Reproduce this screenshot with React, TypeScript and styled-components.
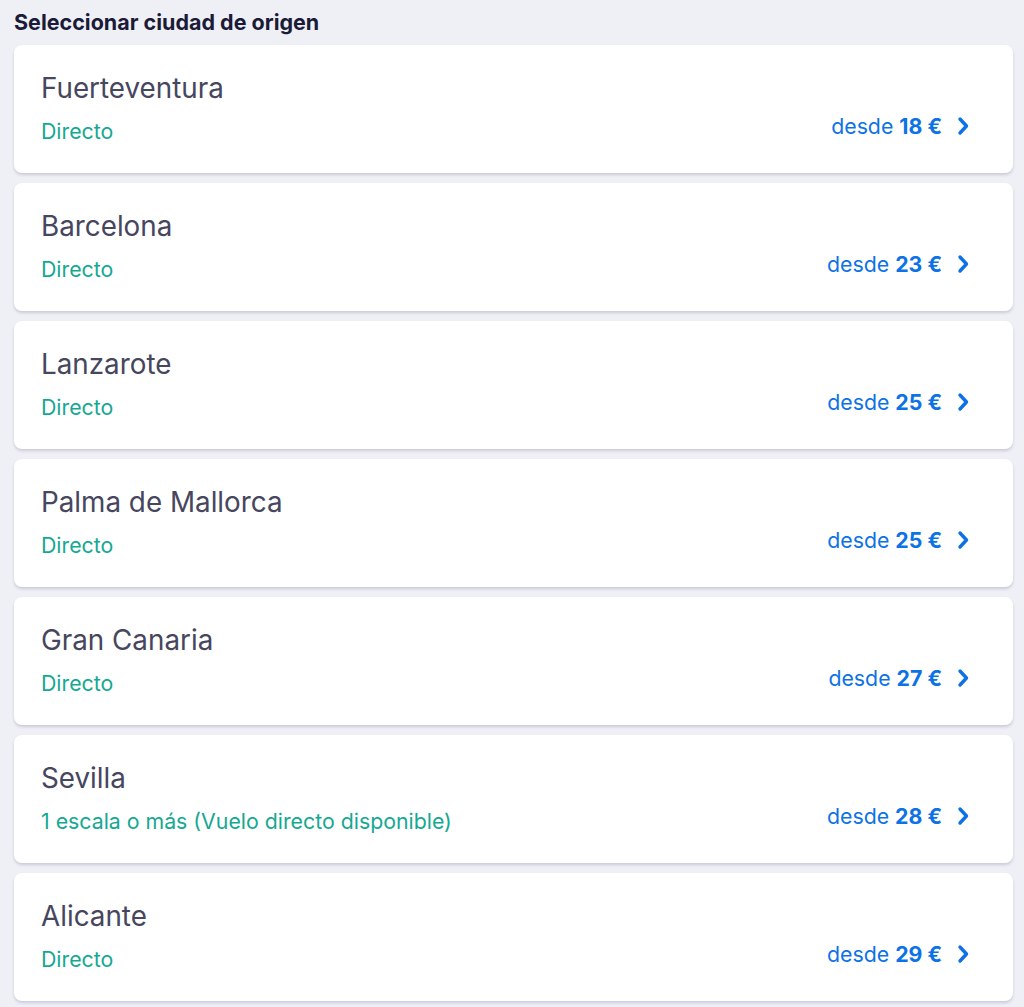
import styled, { createGlobalStyle } from "styled-components";

const GlobalStyle = createGlobalStyle`
  body {
    margin: 0;
    background: #eff0f6;
    font-family: Inter, "Noto Sans", sans-serif;
  }
`;

type Origin = {
  city: string;
  stops: string;
  price: number;
};

const origins: Origin[] = [
  { city: "Fuerteventura", stops: "Directo", price: 18 },
  { city: "Barcelona", stops: "Directo", price: 23 },
  { city: "Lanzarote", stops: "Directo", price: 25 },
  { city: "Palma de Mallorca", stops: "Directo", price: 25 },
  { city: "Gran Canaria", stops: "Directo", price: 27 },
  { city: "Sevilla", stops: "1 escala o más (Vuelo directo disponible)", price: 28 },
  { city: "Alicante", stops: "Directo", price: 29 },
];

const Page = styled.div`
  padding: 9px 11px 6px 14px;
`;

const Title = styled.h2`
  margin: 0 0 10px;
  font-size: 21.5px;
  line-height: 26px;
  font-weight: 700;
  color: #1b1b38;
`;

const List = styled.div`
  display: flex;
  flex-direction: column;
  gap: 10px;
`;

const Card = styled.div`
  height: 128px;
  box-sizing: border-box;
  padding: 26px 43px 0 27px;
  background: #fff;
  border-radius: 8px;
  box-shadow: 0 2px 3px rgba(40, 40, 80, 0.18);
  display: grid;
  grid-template-columns: 1fr auto;
  grid-template-rows: 34px 28px;
  row-gap: 12px;
  cursor: pointer;
`;

const City = styled.div`
  grid-column: 1 / 3;
  font-size: 27.8px;
  line-height: 34px;
  color: #46465e;
`;

const Stops = styled.div`
  font-size: 21.3px;
  line-height: 28px;
  color: #15a892;
`;

const Price = styled.div`
  display: flex;
  align-items: center;
  gap: 14px;
  margin-top: -10px;
  font-size: 21.3px;
  color: #0d72e6;
`;

const Amount = styled.span`
  font-weight: 700;
`;

function Chevron() {
  return (
    <svg width="14" height="20" viewBox="0 0 14 20" fill="none">
      <path
        d="M4 3 L10.5 10 L4 17"
        stroke="#0d72e6"
        strokeWidth="3.4"
        strokeLinecap="round"
        strokeLinejoin="round"
      />
    </svg>
  );
}

export default function App() {
  return (
    <>
      <GlobalStyle />
      <Page>
        <Title>Seleccionar ciudad de origen</Title>
        <List>
          {origins.map((o) => (
            <Card key={o.city}>
              <City>{o.city}</City>
              <Stops>{o.stops}</Stops>
              <Price>
                <span>
                  desde <Amount>{o.price} €</Amount>
                </span>
                <Chevron />
              </Price>
            </Card>
          ))}
        </List>
      </Page>
    </>
  );
}
